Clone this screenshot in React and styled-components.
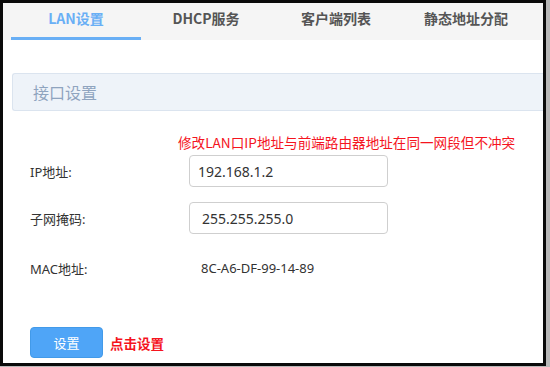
import React from 'react';
import styled, { createGlobalStyle } from 'styled-components';

const GlobalStyle = createGlobalStyle`
  html, body {
    margin: 0;
    padding: 0;
    background: #c8c8c8;
  }
  body {
    font-family: "Noto Sans", "Noto Sans CJK SC", sans-serif;
  }
`;

const Screen = styled.div`
  width: 550px;
  height: 367px;
  background: #b8b8b8;
`;

const Window = styled.div`
  box-sizing: border-box;
  width: 546px;
  height: 366px;
  border: 3px solid #0a0a0a;
  background: #fff;
  display: flex;
  flex-direction: column;
  overflow: hidden;
`;

const TabBar = styled.div`
  display: flex;
  height: 37px;
  padding-left: 8px;
  background: #f5f5f5;
`;

const Tab = styled.div`
  box-sizing: border-box;
  width: 130px;
  flex-shrink: 0;
  display: flex;
  align-items: center;
  justify-content: center;
  padding-bottom: 4px;
  font-family: "Noto Sans CJK SC", sans-serif;
  font-size: 14px;
  font-weight: 700;
  color: ${({ active }) => (active ? '#69aff5' : '#555')};
  border-bottom: 3px solid ${({ active }) => (active ? '#69aff5' : 'transparent')};
`;

const PanelHeader = styled.div`
  box-sizing: border-box;
  height: 38px;
  margin: 33px 0 0 9px;
  padding-left: 20px;
  display: flex;
  align-items: center;
  background: #eef3f9;
  border: 1px solid #dbe4ef;
  border-right: none;
  border-radius: 3px 0 0 3px;
  font-family: "Noto Sans CJK SC", sans-serif;
  font-size: 16px;
  color: #8fa4bf;
`;

const Form = styled.div`
  display: flex;
  flex-direction: column;
  padding-left: 27px;
`;

const Note = styled.div`
  margin: 21px 0 0 148px;
  height: 20px;
  line-height: 20px;
  font-family: "Noto Sans CJK SC", sans-serif;
  font-size: 13.6px;
  color: #f5141e;
  white-space: nowrap;
`;

const Row = styled.div`
  display: flex;
  align-items: center;
  height: 32px;
  margin-top: ${({ gap }) => gap}px;
`;

const Label = styled.div`
  width: 159px;
  flex-shrink: 0;
  font-size: 13px;
  color: #333;
`;

const Input = styled.div`
  box-sizing: border-box;
  width: 199px;
  height: 32px;
  padding-left: ${({ indent }) => indent}px;
  display: flex;
  align-items: center;
  border: 1px solid #cfcfcf;
  border-radius: 4px;
  font-size: 14px;
  color: #333;
`;

const Value = styled.div`
  padding-left: 12px;
  font-size: 13px;
  color: #333;
`;

const Actions = styled.div`
  display: flex;
  align-items: center;
  margin-top: 43px;
`;

const Button = styled.div`
  box-sizing: border-box;
  width: 73px;
  height: 31px;
  display: flex;
  align-items: center;
  justify-content: center;
  background: #4fa5f7;
  border: 1px solid #429ae9;
  border-radius: 4px;
  font-family: "Noto Sans CJK SC", sans-serif;
  font-size: 13px;
  color: #fff;
`;

const Hint = styled.div`
  margin-left: 7px;
  font-family: "Noto Sans CJK SC", sans-serif;
  font-size: 13.5px;
  font-weight: 700;
  color: #f5141e;
`;

const tabs = ['LAN设置', 'DHCP服务', '客户端列表', '静态地址分配'];

const App = () => (
  <Screen>
    <GlobalStyle />
    <Window>
      <TabBar>
        {tabs.map((t, i) => (
          <Tab key={t} active={i === 0}>
            {t}
          </Tab>
        ))}
      </TabBar>
      <PanelHeader>接口设置</PanelHeader>
      <Form>
        <Note>修改LAN口IP地址与前端路由器地址在同一网段但不冲突</Note>
        <Row gap={3}>
          <Label>IP地址:</Label>
          <Input indent={8}>192.168.1.2</Input>
        </Row>
        <Row gap={15}>
          <Label>子网掩码:</Label>
          <Input indent={12}>255.255.255.0</Input>
        </Row>
        <Row gap={18}>
          <Label>MAC地址:</Label>
          <Value>8C-A6-DF-99-14-89</Value>
        </Row>
        <Actions>
          <Button>设置</Button>
          <Hint>点击设置</Hint>
        </Actions>
      </Form>
    </Window>
  </Screen>
);

export default App;
